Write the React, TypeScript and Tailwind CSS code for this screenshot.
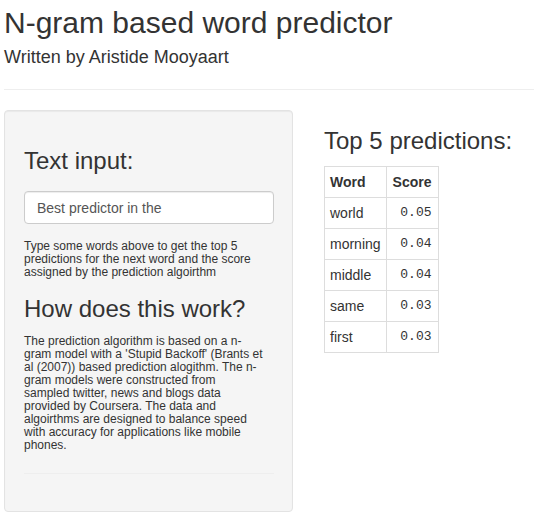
const predictions = [
  { word: 'world', score: '0.05' },
  { word: 'morning', score: '0.04' },
  { word: 'middle', score: '0.04' },
  { word: 'same', score: '0.03' },
  { word: 'first', score: '0.03' },
];

// line breaks as they fall in the original layout
const howItWorks = [
  'The prediction algorithm is based on a n-',
  "gram model with a 'Stupid Backoff' (Brants et",
  'al (2007)) based prediction alogithm. The n-',
  'gram models were constructed from',
  'sampled twitter, news and blogs data',
  'provided by Coursera. The data and',
  'algoirthms are designed to balance speed',
  'with accuracy for applications like mobile',
  'phones.',
];

export default function App() {
  return (
    <div className="min-h-screen bg-white pl-1 text-[#333] font-['Liberation_Sans',Arial,sans-serif]">
      {/* Title */}
      <h2 className="pt-[6px] text-[30px] leading-[1.1] font-normal">N-gram based word predictor</h2>
      <h4 className="mt-[9px] text-[18px] leading-[1.1] font-normal">Written by Aristide Mooyaart</h4>
      <hr className="mt-[21px] border-t border-[#eee]" />

      <div className="mt-5 flex items-start">
        {/* Sidebar well */}
        <div className="h-[402px] w-[289px] shrink-0 rounded border border-[#e3e3e3] bg-[#f5f5f5] px-[19px] pt-[19px] shadow-[inset_0_1px_1px_rgba(0,0,0,0.05)]">
          <h3 className="mt-[18px] text-[24px] leading-[1.1] font-normal">Text input:</h3>
          <div className="mt-[17px] flex h-[33px] w-[250px] items-center rounded border border-[#ccc] bg-white px-3 text-[14px] leading-5 text-[#555] shadow-[inset_0_1px_1px_rgba(0,0,0,0.075)]">
            Best predictor in the
          </div>
          <p className="mt-[16px] w-[250px] text-[12px] leading-[13px]">
            Type some words above to get the top 5 predictions for the next word and the score assigned by the prediction algoirthm
          </p>
          <h3 className="mt-[17px] text-[24px] leading-[1.1] font-normal">How does this work?</h3>
          <p className="mt-[12px] w-[250px] whitespace-nowrap text-[12px] leading-[13px]">
            {howItWorks.map((line, i) => (
              <span key={i} className="block">
                {line}
              </span>
            ))}
          </p>
          <hr className="mt-[21px] w-[250px] border-t border-[#eee]" />
        </div>

        {/* Main panel */}
        <div className="ml-[31px]">
          <h3 className="mt-[18px] text-[24px] leading-[1.1] font-normal">Top 5 predictions:</h3>
          <table className="mt-[12px] border-collapse border border-[#ddd] text-[14px] leading-5">
            <thead>
              <tr>
                <th className="border border-[#ddd] px-[5px] py-[5px] text-left font-bold">Word</th>
                <th className="border border-[#ddd] px-[6px] py-[5px] text-right font-bold">Score</th>
              </tr>
            </thead>
            <tbody>
              {predictions.map((p) => (
                <tr key={p.word}>
                  <td className="border border-[#ddd] px-[5px] py-[5px]">{p.word}</td>
                  <td className="border border-[#ddd] px-[6px] py-[5px] text-right font-['Liberation_Mono','Courier_New',monospace] text-[13px]">
                    {p.score}
                  </td>
                </tr>
              ))}
            </tbody>
          </table>
        </div>
      </div>
    </div>
  );
}
